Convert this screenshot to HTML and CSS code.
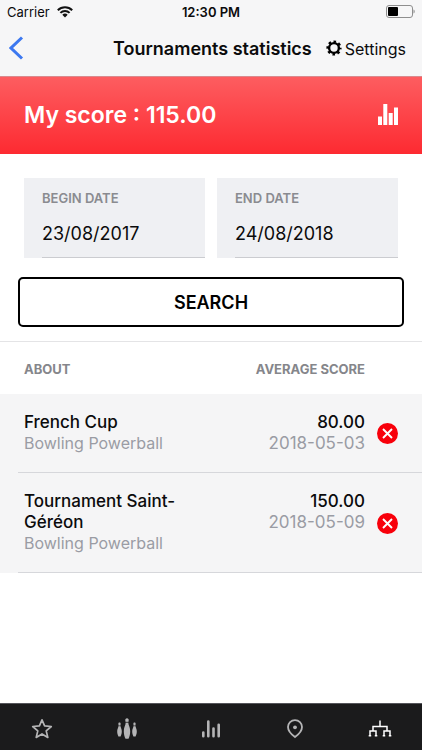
FILE: index.html
```html
<!DOCTYPE html>
<html lang="en">
<head>
<meta charset="utf-8">
<meta name="viewport" content="width=device-width, initial-scale=1">
<title>Tournaments statistics</title>
<link rel="stylesheet" href="styles.css">
</head>
<body>
<div class="app">
  <div class="status">
    <div class="status-side">
      <span>Carrier</span>
      <svg width="16" height="12" viewBox="0 0 16 12" aria-hidden="true">
        <g fill="none" stroke="#111" stroke-width="2">
          <path d="M.8 4.2a10.2 10.2 0 0 1 14.4 0"/>
          <path d="M3.4 6.9a6.5 6.5 0 0 1 9.2 0"/>
        </g>
        <path d="M8 11.6 5.3 8.8a3.9 3.9 0 0 1 5.4 0z" fill="#111"/>
      </svg>
    </div>
    <span class="status-time">12:30 PM</span>
    <div class="status-side status-right">
      <svg width="30" height="14" viewBox="0 0 30 14" aria-hidden="true">
        <rect x="1.500" y=".5" width="26" height="12" rx="2.5" fill="none" stroke="#8e8e8e"/>
        <rect x="3" y="2" width="10" height="9" rx="1" fill="#000"/>
        <path d="M28.500 4.500c1.600.6 1.600 3.400 0 4z" fill="#8e8e8e"/>
      </svg>
    </div>
  </div>

  <header class="navbar">
    <a class="back" href="#" aria-label="Back">
      <svg width="15" height="24" viewBox="0 0 15 24" aria-hidden="true">
        <path d="M13 1.500 2 12l11 10.500" fill="none" stroke="#3c78f0" stroke-width="3"/>
      </svg>
    </a>
    <h1 class="title">Tournaments statistics</h1>
    <a class="settings" href="#">
      <svg width="16" height="16" viewBox="0 0 16 16" aria-hidden="true">
        <circle cx="8" cy="8" r="6.300" fill="none" stroke="#000" stroke-width="2.600" stroke-dasharray="2.500 2.448" stroke-dashoffset="1.250"/>
        <circle cx="8" cy="8" r="4.900" fill="none" stroke="#000" stroke-width="2.400"/>
      </svg>
      <span>Settings</span>
    </a>
  </header>

  <main>
    <section class="banner">
      <h2 class="score">My score : 115.00</h2>
      <svg width="20" height="24" viewBox="0 0 20 24" fill="#fff" aria-hidden="true">
        <path d="M0 12.500h4V21H0zM5.300 0h4v21h-4zM10.700 9h4v12h-4zM16 3.500h4V21h-4z"/>
      </svg>
    </section>

    <form class="search">
      <div class="dates">
        <div class="field">
          <label for="begin">BEGIN DATE</label>
          <input id="begin" type="text" value="23/08/2017">
        </div>
        <div class="field">
          <label for="end">END DATE</label>
          <input id="end" type="text" value="24/08/2018">
        </div>
      </div>
      <button class="submit" type="button">SEARCH</button>
    </form>

    <table class="results">
      <thead>
        <tr><th scope="col">ABOUT</th><th class="num" scope="col">AVERAGE SCORE</th><td class="action"></td></tr>
      </thead>
      <tbody>
        <tr>
          <td class="about">French Cup<span class="sub">Bowling Powerball</span></td>
          <td class="num">80.00<span class="sub">2018-05-03</span></td>
          <td class="action">
            <button class="remove" type="button" aria-label="Remove French Cup">
              <svg width="21" height="21" viewBox="0 0 21 21" aria-hidden="true">
                <circle cx="10.500" cy="10.500" r="10.500" fill="#f8000b"/>
                <path d="m6 6 9 9m0-9-9 9" stroke="#fff" stroke-width="1.900"/>
              </svg>
            </button>
          </td>
        </tr>
        <tr>
          <td class="about">Tournament Saint-Géréon<span class="sub">Bowling Powerball</span></td>
          <td class="num">150.00<span class="sub">2018-05-09</span></td>
          <td class="action">
            <button class="remove" type="button" aria-label="Remove Tournament Saint-Géréon">
              <svg width="21" height="21" viewBox="0 0 21 21" aria-hidden="true">
                <circle cx="10.500" cy="10.500" r="10.500" fill="#f8000b"/>
                <path d="m6 6 9 9m0-9-9 9" stroke="#fff" stroke-width="1.900"/>
              </svg>
            </button>
          </td>
        </tr>
      </tbody>
    </table>
  </main>

  <nav class="tabs" aria-label="Main">
    <a href="#" aria-label="Favourites">
      <svg width="22" height="22" viewBox="0 0 22 22" aria-hidden="true">
        <path d="m11 1.900 2.600 5.900 6.700.7-5.100 4.400 1.600 6.500-5.800-3.500-5.800 3.500 1.600-6.500-5.100-4.400 6.700-.7z" fill="none" stroke="currentColor" stroke-width="1.700" stroke-linejoin="round"/>
      </svg>
    </a>
    <a href="#" aria-label="Bowling">
      <svg width="22" height="22" viewBox="0 0 22 22" fill="currentColor" aria-hidden="true">
        <path d="M11 .3c1.300 0 1.900 1 1.700 2.200-.2 1.300-.5 2.700-.1 4 .5 1.500 1.600 3.500 1.600 6.700 0 3-.8 5.600-1.700 7.600h-3c-.9-2-1.700-4.600-1.700-7.600 0-3.200 1.100-5.200 1.600-6.700.4-1.300.1-2.700-.1-4C9.100 1.300 9.700.3 11 .3z"/>
        <path id="pin" d="M3.500 4.600c.9 0 1.300.7 1.100 1.500-.2 1-.2 2 .1 3 .4 1.200 1.100 2.500 1.100 4.500 0 1.900-.6 3.600-1.200 4.900H2.400c-.6-1.300-1.200-3-1.200-4.900 0-2 .7-3.300 1.100-4.500.3-1 .3-2 .1-3-.2-.8.200-1.500 1.100-1.500z"/>
        <use href="#pin" x="15"/>
        <path d="M9 4.300h4" stroke="#1b1b1c" stroke-width=".8"/>
        <path d="M2 7.800h3m12 0h3" stroke="#1b1b1c" stroke-width=".6"/>
      </svg>
    </a>
    <a href="#" aria-label="Statistics">
      <svg width="22" height="22" viewBox="0 0 22 22" aria-hidden="true">
        <path d="M3.300 18.200v-3.700M8.300 18.200V3.500M13.500 18.200v-7.700M18.700 18.200V6.800" fill="none" stroke="currentColor" stroke-width="2.600" stroke-linecap="round"/>
      </svg>
    </a>
    <a href="#" aria-label="Places">
      <svg width="22" height="22" viewBox="0 0 22 22" aria-hidden="true">
        <path d="M11 19.100c-3.500-2.500-7-5.700-7-10a7 7 0 0 1 14 0c0 4.300-3.500 7.500-7 10z" fill="none" stroke="currentColor" stroke-width="1.800"/>
        <circle cx="11" cy="9.300" r="1.900" fill="currentColor"/>
      </svg>
    </a>
    <a class="active" href="#" aria-label="Tournaments" aria-current="page">
      <svg width="24" height="22" viewBox="0 0 24 22" aria-hidden="true">
        <path d="M12 2.500V8.500M5 13V8.500h14V13M2 18.500V13h6v5.500M16 18.500V13h6v5.500M.7 17.800h2.500m3.600 0h2.500m5.400 0h2.500m3.600 0h2.500" fill="none" stroke="currentColor" stroke-width="1.500"/>
      </svg>
    </a>
  </nav>
</div>
</body>
</html>
```
FILE: styles.css
```css
* { box-sizing: border-box; }

body {
  margin: 0;
  background: #fff;
  color: #0b0b0c;
  font-family: Inter, "Liberation Sans", sans-serif;
  font-size: 16px;
  line-height: 21px;
}

a { color: inherit; text-decoration: none; }
svg { display: block; flex: none; }
h1, h2 { margin: 0; }

.app {
  display: flex;
  flex-direction: column;
  min-height: 100vh;
}

main { flex: 1; }

.status {
  display: flex;
  align-items: center;
  height: 24px;
  padding: 0 7px;
  background: #f6f6f7;
  font-size: 13px;
}

.status-side {
  display: flex;
  flex: 1;
  align-items: center;
  gap: 7px;
}

.status-right { justify-content: flex-end; }
.status-time { font-weight: 600; }

.navbar {
  display: flex;
  align-items: center;
  height: 53px;
  padding: 0 16px 4px 9px;
  border-bottom: 1px solid #d98a8e;
  background: #f6f6f7;
}

.title {
  margin-left: auto;
  font-size: 18px;
  font-weight: 600;
}

.settings {
  display: flex;
  align-items: center;
  gap: 3px;
  margin-left: 14px;
}

.settings span { padding-top: 3px; }

.banner {
  display: flex;
  align-items: center;
  justify-content: space-between;
  height: 77px;
  padding: 0 24px;
  background: linear-gradient(#fd5d60, #fd2a31);
  color: #fff;
}

.score {
  font-size: 23px;
  font-weight: 600;
}

.search {
  padding: 24px 18px 14px;
  border-bottom: 1px solid #e4e4e6;
}

.dates {
  display: flex;
  gap: 12px;
  padding: 0 6px;
}

.field {
  flex: 1;
  min-width: 0;
  padding: 10px 0 0 18px;
  background: #eff0f3;
}

.field label {
  display: block;
  color: #8a8b90;
  font-size: 13px;
  font-weight: 600;
  line-height: 20px;
}

.field input {
  display: block;
  width: 100%;
  height: 50px;
  padding: 2px 0 0;
  border: 0;
  border-bottom: 1px solid #cbccd0;
  border-radius: 0;
  background: none;
  color: inherit;
  font: inherit;
  font-size: 18px;
}

.submit {
  display: block;
  width: 100%;
  height: 50px;
  margin-top: 19px;
  border: 2px solid #000;
  border-radius: 5px;
  background: #fff;
  color: #000;
  font: inherit;
  font-size: 18px;
  font-weight: 600;
}

.results {
  width: 100%;
  border-collapse: collapse;
}

.results th {
  height: 52px;
  padding: 2px 0 0 24px;
  color: #85868b;
  font-size: 13px;
  font-weight: 700;
  text-align: left;
}

.results tbody td {
  padding: 18px 0 19px;
  background: linear-gradient(#d6d7db, #d6d7db) 0 100% / 100% 1px no-repeat #f5f5f6;
  font-size: 17px;
  font-weight: 500;
  vertical-align: top;
}

.results tbody .about {
  width: 48%;
  padding-left: 24px;
  background-position: 18px 100%;
}

.results .num { text-align: right; }

.results tbody .action {
  padding: 0;
  vertical-align: middle;
}

.results .action { width: 57px; }

.sub {
  display: block;
  color: #9a9ca4;
  font-weight: 400;
}

.about .sub { font-size: 16px; }

.remove {
  display: block;
  margin-left: 12px;
  padding: 0;
  border: 0;
  background: none;
}

.tabs {
  display: flex;
  height: 47px;
  padding-top: 3px;
  border-top: 1px solid #55555a;
  background: #1b1b1c;
  color: #b5b5b6;
}

.tabs a {
  display: flex;
  flex: 1;
  align-items: center;
  justify-content: center;
}

.tabs .active { color: #fff; }
```
